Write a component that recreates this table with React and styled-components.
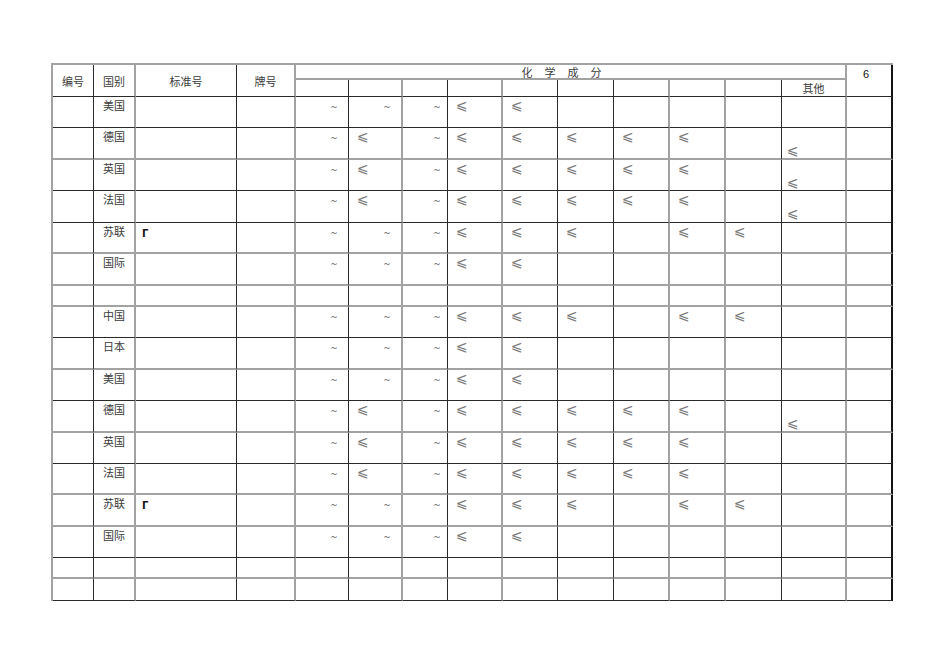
import React from 'react';
import styled, { createGlobalStyle } from 'styled-components';

const GlobalStyle = createGlobalStyle`
  html, body { margin: 0; padding: 0; background: #ffffff; }
  body { font-family: "Noto Sans CJK SC", "Noto Sans", sans-serif; }
`;

const LINES = {
  d: '1px solid #2a2a2a',
  g: '2px solid #a2a2a2',
  t: '2px solid #151515',
};

const colWidths = [41, 42, 101, 59, 53, 54, 45, 55, 55, 56, 56, 56, 56, 65, 46];
const colRight = ['d', 'g', 'd', 'g', 'd', 'g', 'd', 'g', 'd', 'd', 'g', 'g', 'd', 'g', 't'];
const tildePad = { 4: 11, 5: 11, 6: 7 };

const Page = styled.div`
  padding: 63px 0 0 51px;
  width: 950px;
  height: 672px;
  box-sizing: border-box;
`;

const Sheet = styled.div`
  display: grid;
  grid-template-columns: ${colWidths.map((w) => `${w}px`).join(' ')};
  grid-template-rows: ${(p) => p.$rows.map((h) => `${h}px`).join(' ')};
  width: fit-content;
  border-left: ${LINES.g};
  border-top: ${LINES.g};
`;

const Cell = styled.div`
  box-sizing: border-box;
  border-right: ${(p) => LINES[p.$r]};
  border-bottom: ${(p) => LINES[p.$b]};
  grid-column: ${(p) => (p.$cs ? `span ${p.$cs}` : 'auto')};
  grid-row: ${(p) => (p.$rs ? `span ${p.$rs}` : 'auto')};
  text-align: ${(p) => p.$align || 'left'};
  padding: ${(p) => p.$pt || 0}px ${(p) => p.$pr || 0}px 0 ${(p) => p.$pl || 0}px;
  font-size: 11px;
  line-height: 14px;
  overflow: hidden;
  white-space: nowrap;
`;

const HeadCell = styled(Cell)`
  display: flex;
  align-items: ${(p) => (p.$top ? 'flex-start' : 'center')};
  justify-content: center;
  color: #3c3c3c;
`;

const Spaced = styled.span`
  letter-spacing: 12px;
  margin-right: -12px;
  margin-left: -18px;
`;

const Digit = styled.span`
  font-family: "Liberation Sans", Arial, sans-serif;
  font-size: 11px;
  color: #111;
  margin-top: 2px;
  margin-left: -6px;
`;

const Name = styled.span`
  font-size: 11px;
  color: #3a3a3a;
`;

const Tilde = styled.span`
  font-family: "Liberation Serif", serif;
  font-size: 11px;
  color: #333;
`;

const Leq = styled.span`
  font-family: "DejaVu Sans", sans-serif;
  font-size: 14px;
  color: #7a7a7a;
`;

const Gamma = styled.span`
  font-family: "DejaVu Sans", sans-serif;
  font-weight: bold;
  font-size: 10px;
  color: #151515;
`;

const simple = (n) => ['', n, '', '', 'T', 'T', 'T', 'L', 'L', '', '', '', '', '', ''];
const de = (n, other = true) => ['', n, '', '', 'T', 'L', 'T', 'L', 'L', 'L', 'L', 'L', '', other ? 'LOW' : '', ''];
const su = (n, g = true) => ['', n, g ? 'G' : '', '', 'T', 'T', 'T', 'L', 'L', 'L', '', 'L', 'L', '', ''];
const blank = Array(15).fill('');

const rows = [
  { h: 31, b: 'd', cells: simple('美国') },
  { h: 32, b: 'g', cells: de('德国') },
  { h: 31, b: 'd', cells: de('英国') },
  { h: 32, b: 'd', cells: de('法国') },
  { h: 31, b: 'g', cells: su('苏联') },
  { h: 32, b: 'g', cells: simple('国际') },
  { h: 21, b: 'g', cells: blank },
  { h: 31, b: 'd', cells: su('中国', false) },
  { h: 32, b: 'g', cells: simple('日本') },
  { h: 31, b: 'd', cells: simple('美国') },
  { h: 32, b: 'g', cells: de('德国') },
  { h: 31, b: 'd', cells: de('英国', false) },
  { h: 31, b: 'g', cells: de('法国', false) },
  { h: 32, b: 'g', cells: su('苏联') },
  { h: 31, b: 'd', cells: simple('国际') },
  { h: 21, b: 'g', cells: blank },
  { h: 22, b: 'd', cells: blank },
];

function DataCell({ v, col, b }) {
  const r = colRight[col];
  if (v === 'T') {
    return (
      <Cell $r={r} $b={b} $align="right" $pr={tildePad[col]} $pt={1}>
        <Tilde>~</Tilde>
      </Cell>
    );
  }
  if (v === 'L' || v === 'LOW') {
    return (
      <Cell $r={r} $b={b} $pl={col === 13 ? 5 : 8} $pt={v === 'LOW' ? 15 : 1}>
        <Leq>⩽</Leq>
      </Cell>
    );
  }
  if (v === 'G') {
    return (
      <Cell $r={r} $b={b} $pl={6} $pt={2}>
        <Gamma>Г</Gamma>
      </Cell>
    );
  }
  if (v) {
    return (
      <Cell $r={r} $b={b} $align="center" $pt={1}>
        <Name>{v}</Name>
      </Cell>
    );
  }
  return <Cell $r={r} $b={b} />;
}

export default function App() {
  const heights = [15, 17, ...rows.map((r) => r.h)];
  const sub = Array.from({ length: 10 }, (_, i) => i + 4);
  return (
    <>
      <GlobalStyle />
      <Page>
        <Sheet $rows={heights}>
          <HeadCell $r="d" $b="d" $rs={2}>编号</HeadCell>
          <HeadCell $r="g" $b="d" $rs={2}>国别</HeadCell>
          <HeadCell $r="d" $b="d" $rs={2}>标准号</HeadCell>
          <HeadCell $r="g" $b="d" $rs={2}>牌号</HeadCell>
          <HeadCell $r="g" $b="g" $cs={10}>
            <Spaced>化学成分</Spaced>
          </HeadCell>
          <HeadCell $r="t" $b="d" $rs={2} $top>
            <Digit>6</Digit>
          </HeadCell>
          {sub.map((c) => (
            <HeadCell key={c} $r={colRight[c]} $b="d">
              {c === 13 ? '其他' : ''}
            </HeadCell>
          ))}
          {rows.map((row, ri) =>
            row.cells.map((v, ci) => (
              <DataCell key={`${ri}-${ci}`} v={v} col={ci} b={row.b} />
            ))
          )}
        </Sheet>
      </Page>
    </>
  );
}
